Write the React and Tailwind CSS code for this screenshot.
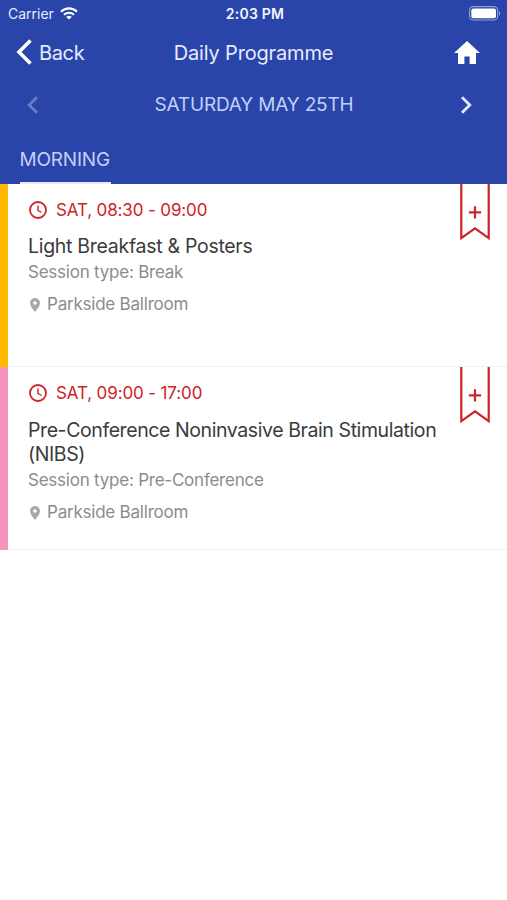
import React from "react";

function WifiIcon() {
  return (
    <svg width="18" height="13" viewBox="0 0 18 13" fill="none" stroke="#fff" strokeWidth="2.1">
      <path d="M1 4.700C5.600 .3 12.400 .3 17 4.700" />
      <path d="M4 7.800C6.900 5 11.100 5 14 7.800" />
      <path d="M9 12.600 6.200 9.900C7.800 8.500 10.200 8.500 11.800 9.900Z" fill="#fff" stroke="none" />
    </svg>
  );
}

function BatteryIcon() {
  return (
    <svg width="33" height="15" viewBox="0 0 33 15" fill="none">
      <rect x="0.6" y="0.6" width="28" height="13.4" rx="3.6" stroke="#93a0d8" strokeWidth="1.1" />
      <rect x="2.3" y="2.5" width="24.7" height="9.7" rx="2" fill="#fff" />
      <path d="M30 5c1.600.5 1.600 4.200 0 4.700Z" fill="#93a0d8" />
    </svg>
  );
}

function ClockIcon() {
  return (
    <svg width="18" height="18" viewBox="0 0 18 18" fill="none" stroke="#cf2228">
      <circle cx="9" cy="9" r="8" strokeWidth="1.8" />
      <path d="M8.900 4.400V9.300L12.500 11.500" strokeWidth="1.400" />
    </svg>
  );
}

function PinIcon() {
  return (
    <svg width="10" height="14" viewBox="0 0 10 14" fill="#a9a9a9">
      <path fillRule="evenodd" d="M5 0a5 5 0 0 0-5 5c0 3.600 5 9 5 9s5-5.400 5-9a5 5 0 0 0-5-5Zm0 3.200a1.800 1.800 0 1 1 0 3.600 1.800 1.800 0 0 1 0-3.600Z" />
    </svg>
  );
}

function BookmarkIcon() {
  return (
    <svg width="32" height="58" viewBox="0 0 32 58" fill="none" stroke="#cf2228" strokeWidth="2.200">
      <path d="M2.300 0V54.200L16 44.300 29.700 54.200V0" />
      <path d="M16 22.200V34.400M9.900 28.300H22.100" />
    </svg>
  );
}

function Session({ bar, time, title, type, place, titleClass }) {
  return (
    <article className="flex h-[183px]">
      <div className={`w-2 shrink-0 ${bar}`} />
      <div className="flex grow border-b border-[#f0f0f0] pl-5">
        <div className="grow pt-[15px]">
          <div className="flex h-[22px] items-center gap-[9px] pl-[1px] text-[17px] text-[#cf2228]">
            <ClockIcon />
            <span className="pt-[2px] tracking-[-0.13px]">{time}</span>
          </div>
          <h2 className={`whitespace-pre text-[19.5px] leading-[24px] text-[#3b3b3b] ${titleClass}`}>{title}</h2>
          <p className="mt-[4px] text-[17px] leading-[20px] tracking-[-0.23px] text-[#8c8c8c]">{type}</p>
          <div className="mt-[12px] flex h-[22px] items-center gap-[7px] pl-[2px] text-[17px] text-[#8c8c8c]">
            <PinIcon />
            <span className="tracking-[-0.22px]">{place}</span>
          </div>
        </div>
        <div className="mr-4 w-8 shrink-0">
          <BookmarkIcon />
        </div>
      </div>
    </article>
  );
}

export default function App() {
  return (
    <main className="min-h-[900px] w-[507px] overflow-hidden bg-white font-['Inter',sans-serif]">
      <header className="flex h-[184px] flex-col bg-[#2945a9] text-[#e6ebff]">
        <div className="grid h-7 grid-cols-3 items-center pl-[8px] pr-[5px] text-[14px]">
          <div className="flex items-center gap-[6px] pb-[2px]">
            <span>Carrier</span>
            <WifiIcon />
          </div>
          <span className="pb-[1px] text-center text-[14px] font-semibold tracking-[0.25px] text-[#f3f5ff]">2:03 PM</span>
          <div className="flex justify-end pb-[1px]">
            <BatteryIcon />
          </div>
        </div>
        <div className="grid h-[48px] grid-cols-[120px_1fr_120px] items-center text-[20px]">
          <div className="flex items-center gap-[7px] pl-4">
            <svg width="16" height="26" viewBox="0 0 16 26" fill="none" stroke="#fff" strokeWidth="3.600">
              <path d="M14.500 1.500 3 13 14.500 24.500" />
            </svg>
            <span className="pt-[2px] tracking-[-0.35px]">Back</span>
          </div>
          <h1 className="pt-[2px] text-center tracking-[-0.17px]">Daily Programme</h1>
          <div className="flex justify-end pr-[27px]">
            <svg width="26" height="23" viewBox="0 0 26 23" fill="#fff">
              <path d="M13 0 0 12H4V23H10.400V15.500H15.600V23H22V12H26Z" />
            </svg>
          </div>
        </div>
        <div className="flex h-[57px] items-center justify-between pl-[27px] pr-[35px] text-[19px] text-[#c3cff8]">
          <svg width="12" height="18" viewBox="0 0 12 18" fill="none" stroke="#6a7dc4" strokeWidth="2.800">
            <path d="M10 1.200 2.200 9 10 16.800" />
          </svg>
          <span className="pl-[9px] pt-[2px] tracking-[-0.18px]">SATURDAY MAY 25TH</span>
          <svg width="12" height="18" viewBox="0 0 12 18" fill="none" stroke="#e1e7ff" strokeWidth="2.800">
            <path d="M2 1.200 9.800 9 2 16.800" />
          </svg>
        </div>
        <div className="flex h-[51px] pl-[19.500px] text-[19px] text-[#c3cff8]">
          <div className="w-[91.500px] whitespace-nowrap border-b-2 border-[#e6ebff] leading-[53px] tracking-[-0.2px]">MORNING</div>
        </div>
      </header>
      <Session
        bar="bg-[#ffb900]"
        time="SAT, 08:30 - 09:00"
        title="Light Breakfast & Posters"
        type="Session type: Break"
        place="Parkside Ballroom"
        titleClass="mt-[13px] tracking-[-0.29px]"
      />
      <Session
        bar="bg-[#f794bd]"
        time="SAT, 09:00 - 17:00"
        title={"Pre-Conference Noninvasive Brain Stimulation\n(NIBS)"}
        type="Session type: Pre-Conference"
        place="Parkside Ballroom"
        titleClass="mt-[14px] tracking-[-0.41px]"
      />
    </main>
  );
}
